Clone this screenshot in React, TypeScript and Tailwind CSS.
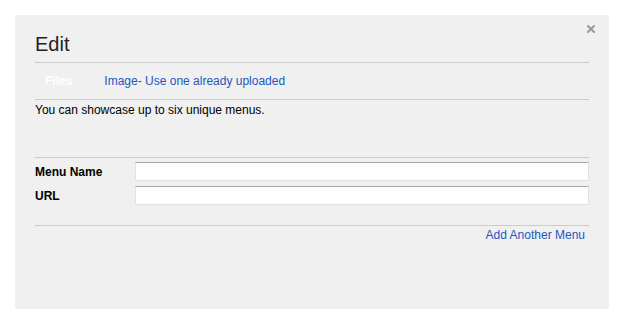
export default function App() {
  return (
    <div className="w-[623px] h-[309px] bg-white pt-[15px] pl-[15px] font-['Liberation_Sans',Arial,sans-serif]">
      <div className="relative w-[594px] h-[294px] bg-[#f0f0f0] px-[20px] pt-[17px]">
        <button className="absolute right-[14px] top-[10px] w-[8px] h-[8px]" aria-label="Close">
          <svg viewBox="0 0 8 8" width="8" height="8" className="block">
            <path d="M1 1 L7 7 M7 1 L1 7" stroke="#9a9a9a" strokeWidth="2" strokeLinecap="square" />
          </svg>
        </button>

        <h2 className="text-[20px] leading-[24px] text-[#222] mb-[6px]">Edit</h2>

        <div className="border-t border-[#cccccc] flex items-center h-[38px] border-b text-[12px]">
          <span className="ml-[10px] font-bold text-white">Files</span>
          <a className="ml-[32px] text-[#2257c0]">Image- Use one already uploaded</a>
        </div>

        <p className="text-[12px] leading-[16px] text-black pt-[2px] h-[57px]">
          You can showcase up to six unique menus.
        </p>

        <div className="border-t border-[#cccccc] pt-[4px] pb-[20px] flex flex-col gap-[5px]">
          <div className="flex items-center">
            <label className="w-[100px] text-[12px] font-bold text-black">Menu Name</label>
            <input
              type="text"
              className="flex-1 h-[19px] bg-white border border-[#e2e2e2] border-t-[#a9a9a9] outline-none"
            />
          </div>
          <div className="flex items-center">
            <label className="w-[100px] text-[12px] font-bold text-black">URL</label>
            <input
              type="text"
              className="flex-1 h-[19px] bg-white border border-[#e2e2e2] border-t-[#a9a9a9] outline-none"
            />
          </div>
        </div>

        <div className="border-t border-[#cccccc] flex justify-end pt-[1px] pr-[4px]">
          <a className="text-[12px] leading-[16px] text-[#2257c0]">Add Another Menu</a>
        </div>
      </div>
    </div>
  );
}
